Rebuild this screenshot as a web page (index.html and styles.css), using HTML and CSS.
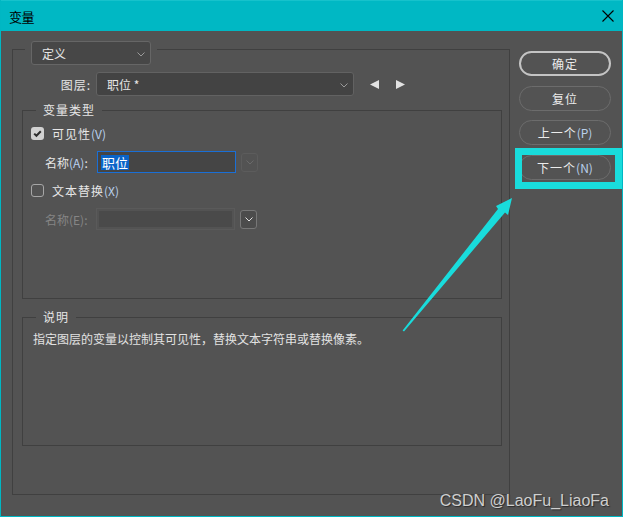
FILE: index.html
```html
<!DOCTYPE html>
<html lang="zh-CN">
<head>
  <meta charset="UTF-8">
  <title>变量</title>
  <link rel="stylesheet" href="styles.css">
</head>
<body>
  <div class="window">
    <div class="titlebar">
      <span class="title">变量</span>
      <svg class="close" width="12" height="12" viewBox="0 0 12 12"><path d="M0.5 0.5 L11.5 11.5 M11.5 0.5 L0.5 11.5" stroke="#000" stroke-width="1.1"/></svg>
    </div>
    <div class="content">
      <div class="group outer">
        <div class="legend-select">
          <div class="select small-select">
            <span>定义</span>
            <svg class="chev" width="8" height="5" viewBox="0 0 8 5"><path d="M0.5 0.5 L4 4 L7.5 0.5" fill="none" stroke="#9a9a9a"/></svg>
          </div>
        </div>
        <div class="row layer-row">
          <label class="lbl layer-lbl">图层:</label>
          <div class="select layer-select">
            <span>职位 *</span>
            <svg class="chev" width="8" height="5" viewBox="0 0 8 5"><path d="M0.5 0.5 L4 4 L7.5 0.5" fill="none" stroke="#9a9a9a"/></svg>
          </div>
          <svg class="nav prev" width="10" height="9" viewBox="0 0 10 9"><path d="M0 4.5 L9 0 L9 9 Z" fill="#e2e2e2"/></svg>
          <svg class="nav next" width="10" height="9" viewBox="0 0 10 9"><path d="M10 4.5 L1 0 L1 9 Z" fill="#e2e2e2"/></svg>
        </div>

        <div class="group type-group">
          <div class="legend">变量类型</div>
          <div class="row check-row first-check">
            <span class="checkbox checked">
              <svg width="13" height="13" viewBox="0 0 13 13"><path d="M3.2 6.6 L5.4 8.8 L9.8 4.2" fill="none" stroke="#2e2e2e" stroke-width="2"/></svg>
            </span>
            <span class="check-text">可见性<span class="key">(V)</span></span>
          </div>
          <div class="row name-row">
            <label class="lbl name-lbl">名称<span class="key">(A)</span>:</label>
            <div class="input active"><span class="sel">职位</span></div>
            <div class="mini-btn disabled">
              <svg width="8" height="5" viewBox="0 0 8 5"><path d="M0.5 0.5 L4 4 L7.5 0.5" fill="none" stroke="#6a6a6a"/></svg>
            </div>
          </div>
          <div class="row check-row second-check">
            <span class="checkbox"></span>
            <span class="check-text">文本替换<span class="key">(X)</span></span>
          </div>
          <div class="row name-row off">
            <label class="lbl name-lbl dim">名称(E):</label>
            <div class="input disabled-input"></div>
            <div class="mini-btn">
              <svg width="8" height="5" viewBox="0 0 8 5"><path d="M0.5 0.5 L4 4 L7.5 0.5" fill="none" stroke="#e0e0e0"/></svg>
            </div>
          </div>
        </div>

        <div class="group desc-group">
          <div class="legend">说明</div>
          <p class="desc">指定图层的变量以控制其可见性，替换文本字符串或替换像素。</p>
        </div>
      </div>

      <div class="buttons">
        <button class="btn default">确定</button>
        <button class="btn">复位</button>
        <button class="btn">上一个<span class="key">(P)</span></button>
        <button class="btn">下一个<span class="key">(N)</span></button>
      </div>
    </div>

    <!-- annotation overlay -->
    <div class="highlight"></div>
    <svg class="arrow" width="623" height="517" viewBox="0 0 623 517">
      <path d="M402.6 330.4 L498 209 L496 206 L512 198 L508 215 L505 212.4 L404 331.6 Z" fill="#19dcdc"/>
    </svg>
    <div class="watermark">CSDN @LaoFu_LiaoFa</div>
  </div>
</body>
</html>
```

FILE: styles.css
```css
html, body {
  margin: 0;
  padding: 0;
}
body {
  font-family: "Noto Sans CJK SC", "Microsoft YaHei", sans-serif;
  font-size: 12px;
  color: #e6e6e6;
  background: #535353;
}
.window {
  position: relative;
  width: 623px;
  height: 517px;
  box-sizing: border-box;
  border: 1px solid #00b7c3;
  border-top: none;
  background: #535353;
  overflow: hidden;
}
.titlebar {
  height: 31px;
  background: #00b8c4;
  border-top: 1px solid #16c2cc;
  box-sizing: border-box;
  display: flex;
  align-items: center;
  justify-content: space-between;
  padding: 0 8px 0 8px;
}
.title {
  color: #000;
  font-size: 13px;
  letter-spacing: -0.5px;
}
.close {
  display: block;
  margin-top: -1px;
}
.content {
  display: flex;
  padding: 18px 0 0 11px;
}
.group {
  border: 1px solid #404040;
  box-sizing: border-box;
}
.outer {
  width: 498px;
  height: 446px;
}
.legend-select {
  width: fit-content;
  margin: -9px 0 0 12px;
  padding: 0 6px;
  background: #535353;
}
.select {
  box-sizing: border-box;
  height: 24px;
  border: 1px solid #666;
  border-radius: 3px;
  background: #474747;
  display: flex;
  align-items: center;
  justify-content: space-between;
  padding: 0 5px 0 10px;
}
.small-select {
  width: 120px;
}
.chev {
  margin-top: 2px;
}
.row {
  display: flex;
  align-items: center;
}
.layer-row {
  margin-top: 7px;
}
.lbl {
  text-align: right;
  box-sizing: border-box;
}
.layer-lbl {
  width: 78px;
  margin-right: 5px;
  letter-spacing: 1px;
}
.layer-select {
  width: 258px;
  background: #434343;
  border-color: #626262;
}
.nav {
  display: block;
}
.prev {
  margin-left: 16px;
}
.next {
  margin-left: 15px;
}
.type-group {
  width: 480px;
  height: 189px;
  margin: 14px 0 0 9px;
}
.legend {
  width: fit-content;
  margin: -9px 0 0 13px;
  padding: 0 7px;
  background: #535353;
  line-height: 16px;
  letter-spacing: 1px;
}
.check-row {
  height: 20px;
  padding-left: 8px;
}
.first-check {
  margin-top: 5px;
}
.second-check {
  margin-top: 7px;
}
.checkbox {
  box-sizing: border-box;
  width: 13px;
  height: 13px;
  border: 1.5px solid #a6a6a6;
  border-radius: 3px;
  margin-right: 8px;
  display: block;
}
.checkbox.checked {
  border: none;
  background: #d2d2d2;
}
.checkbox svg {
  display: block;
}
.check-text {
  letter-spacing: 1px;
}
.key {
  color: #b9d0ec;
  letter-spacing: 0;
}
.name-row {
  margin-top: 8px;
  padding-left: 22px;
}
.name-lbl {
  width: 46px;
  margin-right: 6px;
  text-align: left;
}
.dim {
  color: #858585;
}
.input {
  box-sizing: border-box;
  width: 139px;
  height: 22px;
  background: #454545;
  border: 1px solid #5c5c5c;
  display: flex;
  align-items: center;
  padding-left: 3px;
}
.input.active {
  border-color: #1a6fd6;
}
.sel {
  background: #0a64c8;
  color: #fff;
  font-size: 13px;
  line-height: 15px;
  padding: 0 1px;
}
.disabled-input {
  margin-left: -1px;
  background: #4a4a4a;
  border-color: #5a5a5a;
  box-shadow: inset 0 0 0 2px #535353;
}
.mini-btn {
  box-sizing: border-box;
  width: 17px;
  height: 19px;
  margin-left: 5px;
  border: 1px solid #777;
  border-radius: 3px;
  background: #4c4c4c;
  display: flex;
  align-items: center;
  justify-content: center;
}
.mini-btn.disabled {
  border-color: #5c5c5c;
  background: #535353;
}
.desc-group {
  width: 480px;
  height: 129px;
  margin: 18px 0 0 9px;
}
.desc {
  margin: 6px 0 0 10px;
  line-height: 16px;
  font-size: 12px;
  color: #e2e2e2;
}
.buttons {
  display: flex;
  flex-direction: column;
  gap: 9.67px;
  margin: 2px 0 0 9px;
}
.btn {
  width: 92px;
  height: 25px;
  box-sizing: border-box;
  border: 1.5px solid #6c6c6c;
  border-radius: 13px;
  background: #535353;
  color: #ececec;
  font-family: inherit;
  font-size: 12px;
  letter-spacing: 1px;
  padding: 0;
}
.btn.default {
  border: 2px solid #c4c4c4;
}
.highlight {
  position: absolute;
  left: 514px;
  top: 148px;
  width: 107px;
  height: 41px;
  box-sizing: border-box;
  border: 7px solid #19dcdc;
}
.arrow {
  position: absolute;
  left: -1px;
  top: 0;
  pointer-events: none;
}
.watermark {
  position: absolute;
  right: 13px;
  bottom: 6px;
  font-family: "Liberation Sans", Arial, sans-serif;
  font-size: 16px;
  color: #cfcfcf;
  text-shadow: 1px 1px 1px #2a2a2a;
}
```
